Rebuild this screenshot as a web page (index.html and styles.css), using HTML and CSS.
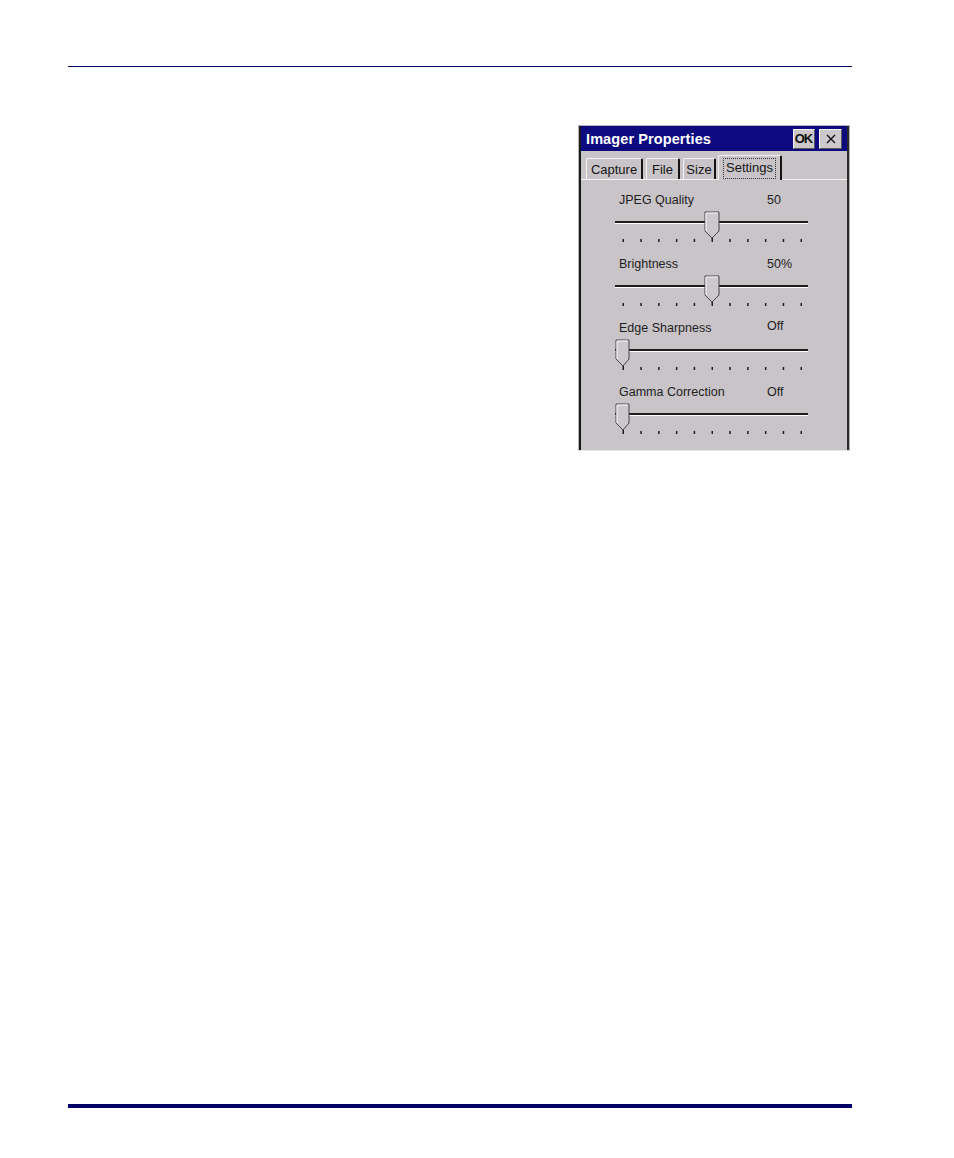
FILE: index.html
```html
<!DOCTYPE html>
<html>
<head>
<meta charset="utf-8">
<title>Imager Properties</title>
<link rel="stylesheet" href="styles.css">
</head>
<body>
<div class="page">
  <div class="rule-top"></div>
  <div class="figure">
    <div class="dialog">
      <div class="frame">
        <div class="titlebar">
          <span class="title">Imager Properties</span>
          <div class="title-buttons">
            <span class="tbtn ok">OK</span>
            <span class="tbtn close">
              <svg width="10" height="10" viewBox="0 0 10 10"><path d="M1 1 L9 9 M9 1 L1 9" stroke="#111" stroke-width="1.4" fill="none"/></svg>
            </span>
          </div>
        </div>
        <div class="tabstrip">
          <span class="tab tab-capture">Capture</span>
          <span class="tab tab-file">File</span>
          <span class="tab tab-size">Size</span>
          <span class="tab tab-settings active"><span class="focus">Settings</span></span>
        </div>
        <div class="panel">
          <div class="group">
            <div class="label-row"><span class="label">JPEG Quality</span><span class="value">50</span></div>
            <svg class="slider" width="202" height="34" viewBox="0 0 202 34">
              <rect x="5" y="11" width="193" height="2" fill="#1c1c1c"/>
              <rect x="5" y="13" width="193" height="1" fill="#ffffff"/>
              <g fill="#1c1c1c">
                <rect x="12.5" y="29" width="1.5" height="3"/><rect x="30.3" y="29" width="1.5" height="3"/><rect x="48.1" y="29" width="1.5" height="3"/><rect x="65.9" y="29" width="1.5" height="3"/><rect x="83.7" y="29" width="1.5" height="3"/><rect x="101.5" y="28" width="1.5" height="4"/><rect x="119.3" y="29" width="1.5" height="3"/><rect x="137.1" y="29" width="1.5" height="3"/><rect x="154.9" y="29" width="1.5" height="3"/><rect x="172.7" y="29" width="1.5" height="3"/><rect x="190.5" y="29" width="1.5" height="3"/>
              </g>
              <polygon points="95,2 109,2 109,21 102,28 95,21" fill="#ccc8cc" stroke="#444" stroke-width="1"/>
              <polyline points="96,21 96,3 108,3" fill="none" stroke="#fafafa" stroke-width="1"/>
            </svg>
          </div>
          <div class="group">
            <div class="label-row"><span class="label">Brightness</span><span class="value">50%</span></div>
            <svg class="slider" width="202" height="34" viewBox="0 0 202 34">
              <rect x="5" y="11" width="193" height="2" fill="#1c1c1c"/>
              <rect x="5" y="13" width="193" height="1" fill="#ffffff"/>
              <g fill="#1c1c1c">
                <rect x="12.5" y="29" width="1.5" height="3"/><rect x="30.3" y="29" width="1.5" height="3"/><rect x="48.1" y="29" width="1.5" height="3"/><rect x="65.9" y="29" width="1.5" height="3"/><rect x="83.7" y="29" width="1.5" height="3"/><rect x="101.5" y="28" width="1.5" height="4"/><rect x="119.3" y="29" width="1.5" height="3"/><rect x="137.1" y="29" width="1.5" height="3"/><rect x="154.9" y="29" width="1.5" height="3"/><rect x="172.7" y="29" width="1.5" height="3"/><rect x="190.5" y="29" width="1.5" height="3"/>
              </g>
              <polygon points="95,2 109,2 109,21 102,28 95,21" fill="#ccc8cc" stroke="#444" stroke-width="1"/>
              <polyline points="96,21 96,3 108,3" fill="none" stroke="#fafafa" stroke-width="1"/>
            </svg>
          </div>
          <div class="group">
            <div class="label-row"><span class="label">Edge Sharpness</span><span class="value raised">Off</span></div>
            <svg class="slider" width="202" height="34" viewBox="0 0 202 34">
              <rect x="5" y="11" width="193" height="2" fill="#1c1c1c"/>
              <rect x="5" y="13" width="193" height="1" fill="#ffffff"/>
              <g fill="#1c1c1c">
                <rect x="12.5" y="28" width="1.5" height="4"/><rect x="30.3" y="29" width="1.5" height="3"/><rect x="48.1" y="29" width="1.5" height="3"/><rect x="65.9" y="29" width="1.5" height="3"/><rect x="83.7" y="29" width="1.5" height="3"/><rect x="101.5" y="29" width="1.5" height="3"/><rect x="119.3" y="29" width="1.5" height="3"/><rect x="137.1" y="29" width="1.5" height="3"/><rect x="154.9" y="29" width="1.5" height="3"/><rect x="172.7" y="29" width="1.5" height="3"/><rect x="190.5" y="29" width="1.5" height="3"/>
              </g>
              <polygon points="6,2 19,2 19,21 13,28 6,21" fill="#ccc8cc" stroke="#444" stroke-width="1"/>
              <polyline points="7,21 7,3 18,3" fill="none" stroke="#fafafa" stroke-width="1"/>
            </svg>
          </div>
          <div class="group">
            <div class="label-row"><span class="label">Gamma Correction</span><span class="value">Off</span></div>
            <svg class="slider" width="202" height="34" viewBox="0 0 202 34">
              <rect x="5" y="11" width="193" height="2" fill="#1c1c1c"/>
              <rect x="5" y="13" width="193" height="1" fill="#ffffff"/>
              <g fill="#1c1c1c">
                <rect x="12.5" y="28" width="1.5" height="4"/><rect x="30.3" y="29" width="1.5" height="3"/><rect x="48.1" y="29" width="1.5" height="3"/><rect x="65.9" y="29" width="1.5" height="3"/><rect x="83.7" y="29" width="1.5" height="3"/><rect x="101.5" y="29" width="1.5" height="3"/><rect x="119.3" y="29" width="1.5" height="3"/><rect x="137.1" y="29" width="1.5" height="3"/><rect x="154.9" y="29" width="1.5" height="3"/><rect x="172.7" y="29" width="1.5" height="3"/><rect x="190.5" y="29" width="1.5" height="3"/>
              </g>
              <polygon points="6,2 19,2 19,21 13,28 6,21" fill="#ccc8cc" stroke="#444" stroke-width="1"/>
              <polyline points="7,21 7,3 18,3" fill="none" stroke="#fafafa" stroke-width="1"/>
            </svg>
          </div>
        </div>
      </div>
    </div>
  </div>
  <div class="rule-bottom"></div>
</div>
</body>
</html>
```

FILE: styles.css
```css
* { box-sizing: border-box; }

html, body {
  margin: 0;
  padding: 0;
  background: #ffffff;
}

.page {
  width: 954px;
  height: 1158px;
  padding: 66px 102px 0 68px;
  font-family: "Liberation Sans", Arial, sans-serif;
}

.rule-top {
  height: 1px;
  background: #000060;
  width: 784px;
}

.figure {
  display: flex;
  justify-content: flex-start;
  padding-left: 510px;
  margin-top: 58px;
}

.dialog {
  width: 272px;
  border: 1px solid #b4b4b8;
  border-bottom-color: #e8e8e8;
  background: #c8c4c8;
}

.frame {
  border-left: 2px solid #1a1a1a;
  border-right: 2px solid #2a2a2a;
}

.titlebar {
  height: 25px;
  background: #0c0a7e;
  display: flex;
  align-items: center;
  justify-content: space-between;
  padding: 0 5px 0 5px;
}

.title {
  color: #ffffff;
  font-weight: bold;
  font-size: 14.5px;
  letter-spacing: 0.1px;
}

.title-buttons {
  display: flex;
  gap: 4px;
}

.tbtn {
  width: 22px;
  height: 20px;
  background: #ccc8cc;
  display: flex;
  align-items: center;
  justify-content: center;
  border-top: 1px solid #f4f4f4;
  border-left: 1px solid #f4f4f4;
  border-right: 1px solid #5a5a5a;
  border-bottom: 1px solid #5a5a5a;
}

.tbtn.ok {
  font-weight: bold;
  font-size: 13px;
  color: #111;
  letter-spacing: -1px;
  padding-right: 1px;
}

.tbtn.close {
  width: 23px;
}

.tabstrip {
  height: 28px;
  display: flex;
  align-items: flex-end;
  padding-left: 5px;
  gap: 3px;
}

.tab {
  height: 21px;
  font-size: 13px;
  color: #151515;
  display: flex;
  align-items: center;
  justify-content: center;
  border-top: 1px solid #f2f2f2;
  border-left: 1px solid #f2f2f2;
  border-right: 2px solid #141414;
  border-radius: 2px 2px 0 0;
  padding: 1px 0 0 0;
}

.tab-capture { width: 57px; }
.tab-file { width: 34px; }
.tab-size { width: 33px; }

.tab-settings {
  width: 64px;
  height: 25px;
  margin-left: -1px;
  margin-bottom: -1px;
  position: relative;
  background: #c8c4c8;
  z-index: 1;
}

.focus {
  border: 1px dotted #333;
  padding: 2px 2px 3px 2px;
  line-height: 14px;
}

.panel {
  border-top: 1px solid #f4f4f4;
  height: 271px;
  padding: 12px 0 0 29px;
  display: flex;
  flex-direction: column;
  gap: 12px;
}

.group {
  display: flex;
  flex-direction: column;
  gap: 2px;
}

.label-row {
  display: grid;
  grid-template-columns: 148px auto;
  height: 16px;
  align-items: center;
  padding-left: 9px;
  font-size: 12.5px;
  color: #1e1e1e;
}

.value.raised {
  position: relative;
  top: -2px;
}

.slider {
  display: block;
}

.rule-bottom {
  width: 784px;
  height: 4px;
  background: #000066;
  margin-top: 653px;
}
```
